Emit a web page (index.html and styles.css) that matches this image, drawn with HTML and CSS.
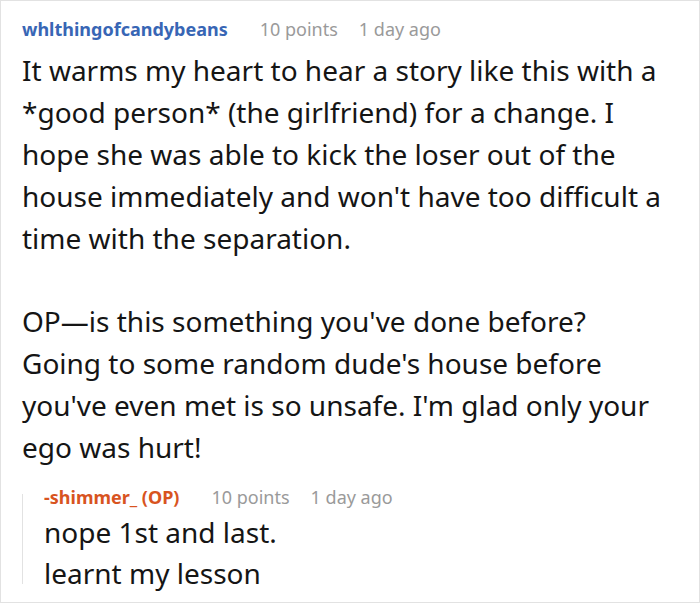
FILE: index.html
```html
<!DOCTYPE html>
<html>
<head>
<meta charset="utf-8">
<link rel="stylesheet" href="styles.css">
</head>
<body>
<div class="frame">
  <div class="comment">
    <div class="meta">
      <span class="user">whlthingofcandybeans</span>
      <span class="points">10 points</span>
      <span class="time">1 day ago</span>
    </div>
    <div class="body">
      <p>It warms my heart to hear a story like this with a *good person* (the girlfriend) for a change. I hope she was able to kick the loser out of the house immediately and won't have too difficult a time with the separation.</p>
      <p>OP—is this something you've done before? Going to some random dude's house before you've even met is so unsafe. I'm glad only your ego was hurt!</p>
    </div>
    <div class="reply">
      <div class="rule"></div>
      <div class="reply-content">
        <div class="meta">
          <span class="user op">-shimmer_ (OP)</span>
          <span class="points">10 points</span>
          <span class="time">1 day ago</span>
        </div>
        <div class="body">
          <p>nope 1st and last.<br>learnt my lesson</p>
        </div>
      </div>
    </div>
  </div>
</div>
</body>
</html>
```

FILE: styles.css
```css
html, body {
  margin: 0;
  padding: 0;
  background: #fff;
}
.frame {
  box-sizing: border-box;
  width: 700px;
  height: 603px;
  border: 1px solid #e2e2e2;
  overflow: hidden;
  font-family: "Noto Sans", "Open Sans", sans-serif;
  color: #151515;
}
.comment {
  padding: 15px 36px 0 21px;
}
.meta {
  display: flex;
  font-size: 18px;
  line-height: 27px;
}
.user {
  font-weight: bold;
  color: #3866b5;
}
.user.op {
  color: #d8541f;
}
.points,
.time {
  color: #9a9a9a;
}
.points {
  margin-left: 32px;
}
.time {
  margin-left: 21px;
}
.body {
  font-size: 28px;
  line-height: 42px;
  margin-top: 6px;
}
.body p {
  margin: 0;
}
.body p + p {
  margin-top: 41px;
}
.reply {
  display: flex;
  margin-top: 16px;
}
.rule {
  width: 1px;
  background: #e2e2e2;
  margin: 10px 0 10px;
}
.reply-content {
  padding-left: 21px;
}
.reply .body {
  margin-top: 1px;
  line-height: 41px;
}
```
